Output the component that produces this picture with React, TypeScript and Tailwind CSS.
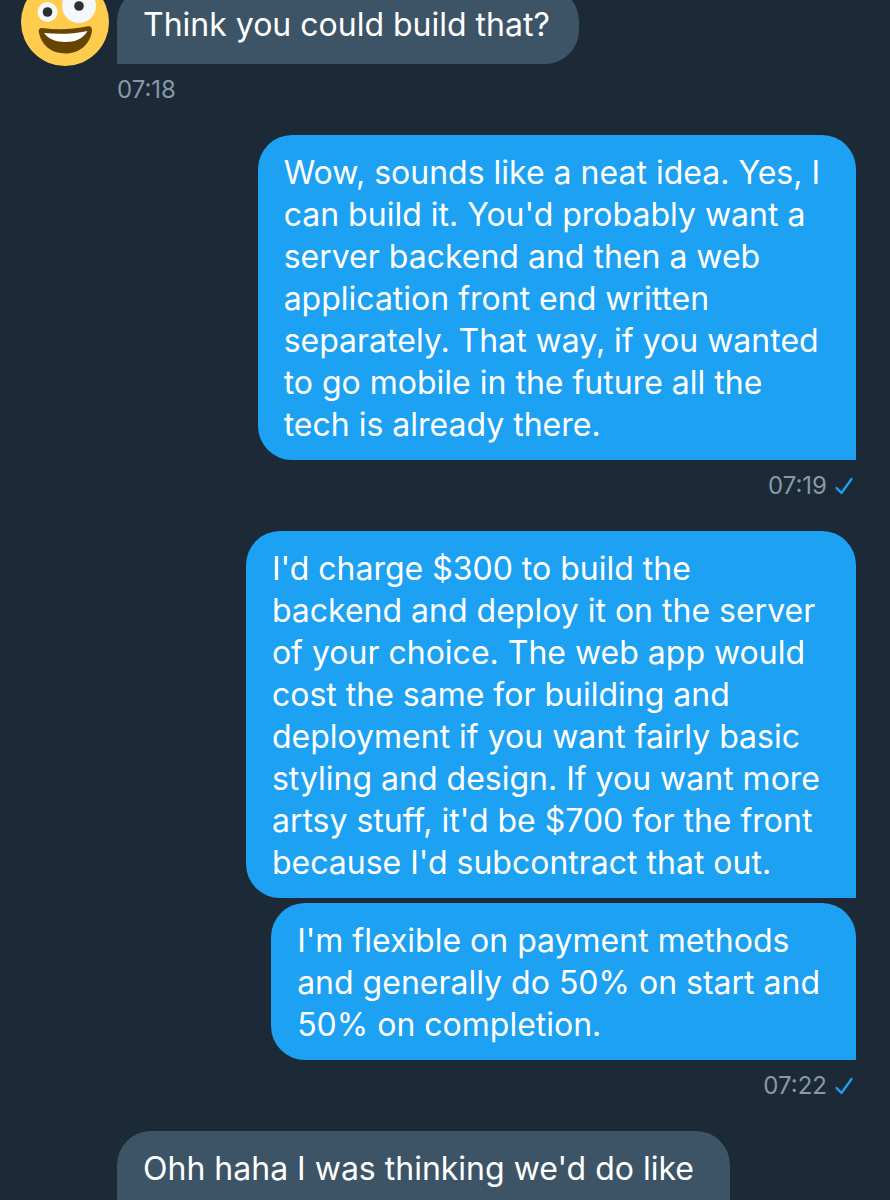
type Message = {
  id: number;
  lines: string[];
};

type Group = {
  id: number;
  from: "me" | "them";
  time?: string;
  messages: Message[];
};

const groups: Group[] = [
  {
    id: 1,
    from: "them",
    time: "07:18",
    messages: [{ id: 1, lines: ["Think you could build that?"] }],
  },
  {
    id: 2,
    from: "me",
    time: "07:19",
    messages: [
      {
        id: 2,
        lines: [
          "Wow, sounds like a neat idea. Yes, I",
          "can build it. You'd probably want a",
          "server backend and then a web",
          "application front end written",
          "separately. That way, if you wanted",
          "to go mobile in the future all the",
          "tech is already there.",
        ],
      },
    ],
  },
  {
    id: 3,
    from: "me",
    time: "07:22",
    messages: [
      {
        id: 3,
        lines: [
          "I'd charge $300 to build the",
          "backend and deploy it on the server",
          "of your choice. The web app would",
          "cost the same for building and",
          "deployment if you want fairly basic",
          "styling and design. If you want more",
          "artsy stuff, it'd be $700 for the front",
          "because I'd subcontract that out.",
        ],
      },
      {
        id: 4,
        lines: [
          "I'm flexible on payment methods",
          "and generally do 50% on start and",
          "50% on completion.",
        ],
      },
    ],
  },
  {
    id: 4,
    from: "them",
    messages: [{ id: 5, lines: ["Ohh haha I was thinking we'd do like", " "] }],
  },
];

const Avatar = () => (
  <svg viewBox="0 0 88 88" className="-mt-[9px] size-[88px]" aria-hidden="true">
    <circle cx="44" cy="44" r="44" fill="#ffcc4d" />
    <circle cx="26.5" cy="34" r="10" fill="#f5f8fa" />
    <circle cx="58" cy="28" r="17" fill="#f5f8fa" />
    <circle cx="26.5" cy="34" r="4.8" fill="#292f33" />
    <circle cx="58" cy="28" r="4.8" fill="#292f33" />
    <path
      d="M21 50C17.5 50 17.6 53 18 55C20.5 67 30 75.5 44.5 75.5C59 75.5 69 66 71 53C71.3 50 70 48 67 48.2C51 51.5 37 52 21 50Z"
      fill="#664500"
    />
    <path
      d="M23 55C37 56.5 52 56 66.5 53C62 61 54 64 44.5 64C34.5 64 27.5 61 23 55Z"
      fill="#fff"
    />
  </svg>
);

const Check = () => (
  <svg viewBox="0 0 18 18" className="size-[18px]" fill="none" aria-hidden="true">
    <path
      d="M1.5 11L6.5 16L16.5 2"
      stroke="#1da1f2"
      strokeWidth="2.2"
      strokeLinecap="round"
      strokeLinejoin="round"
    />
  </svg>
);

const Bubble = ({ message, from }: { message: Message; from: Group["from"] }) => {
  const look =
    from === "me"
      ? "rounded-br-none bg-[#1da1f2]"
      : "rounded-bl-none bg-[#3d5466]";
  // Wrapped messages sit in a slightly wider, tighter bubble
  const pad = message.lines.length > 1 ? "pr-9 pb-[14px]" : "pr-[29px] pb-[18px]";

  return (
    <p
      className={`w-fit rounded-[34px] pt-[17px] pl-[26px] text-[32px] leading-[42px] whitespace-pre text-white ${look} ${pad}`}
    >
      {message.lines.join("\n")}
    </p>
  );
};

const MessageGroup = ({ group }: { group: Group }) => {
  const mine = group.from === "me";

  return (
    <li className={`flex items-start gap-2 ${mine ? "justify-end pr-[34px]" : "pl-[21px]"}`}>
      {!mine && <div className="w-[88px] shrink-0">{group.time && <Avatar />}</div>}
      <div className={`flex flex-col gap-[5px] ${mine ? "items-end" : "items-start"}`}>
        {group.messages.map((message) => (
          <Bubble key={message.id} message={message} from={group.from} />
        ))}
        {group.time && (
          <div
            className={`mt-[5px] flex items-center gap-2 text-2xl leading-8 text-[#8899a6] ${mine ? "pr-[3px]" : ""}`}
          >
            <time>{group.time}</time>
            {mine && <Check />}
          </div>
        )}
      </div>
    </li>
  );
};

export default function App() {
  return (
    <main className="h-screen overflow-hidden bg-[#1c2936] font-['Inter',sans-serif]">
      <ul className="-mt-[13px] flex flex-col gap-[29px]">
        {groups.map((group) => (
          <MessageGroup key={group.id} group={group} />
        ))}
      </ul>
    </main>
  );
}
